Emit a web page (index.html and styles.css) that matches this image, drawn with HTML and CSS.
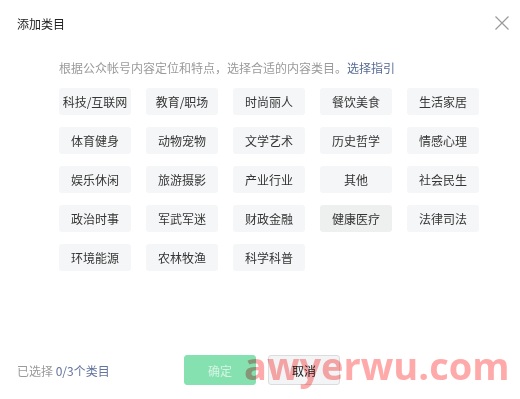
FILE: index.html
```html
<!DOCTYPE html>
<html lang="zh-CN">
<head>
<meta charset="utf-8">
<title>添加类目</title>
<link rel="stylesheet" href="styles.css">
</head>
<body>
<div class="dialog">
  <div class="header">
    <h3 class="title">添加类目</h3>
    <button class="close" aria-label="关闭">
      <svg width="14" height="14" viewBox="0 0 14 14"><path d="M0.5 0.5L13.5 13.5M13.5 0.5L0.5 13.5" stroke="#9a9a9a" stroke-width="1.2" fill="none"/></svg>
    </button>
  </div>
  <div class="main">
    <p class="desc">根据公众帐号内容定位和特点，选择合适的内容类目。<a class="link">选择指引</a></p>
    <ul class="tags">
      <li class="tag">科技/互联网</li>
      <li class="tag">教育/职场</li>
      <li class="tag">时尚丽人</li>
      <li class="tag">餐饮美食</li>
      <li class="tag">生活家居</li>
      <li class="tag">体育健身</li>
      <li class="tag">动物宠物</li>
      <li class="tag">文学艺术</li>
      <li class="tag">历史哲学</li>
      <li class="tag">情感心理</li>
      <li class="tag">娱乐休闲</li>
      <li class="tag">旅游摄影</li>
      <li class="tag">产业行业</li>
      <li class="tag">其他</li>
      <li class="tag">社会民生</li>
      <li class="tag">政治时事</li>
      <li class="tag">军武军迷</li>
      <li class="tag">财政金融</li>
      <li class="tag tag-hover">健康医疗</li>
      <li class="tag">法律司法</li>
      <li class="tag">环境能源</li>
      <li class="tag">农林牧渔</li>
      <li class="tag">科学科普</li>
    </ul>
  </div>
  <div class="footer">
    <div class="count">已选择 <span class="num">0/3个类目</span></div>
    <div class="actions">
      <button class="btn btn-primary">确定</button>
      <button class="btn btn-default">取消</button>
    </div>
    <div></div>
  </div>
  <div class="watermark">awyerwu.com</div>
</div>
</body>
</html>
```
FILE: styles.css
```css
* { box-sizing: border-box; }
html, body { margin: 0; padding: 0; background: #fff; }
body {
  font-family: "Noto Sans CJK SC", "Noto Sans", sans-serif;
  font-size: 12px;
  color: #353535;
}
.dialog {
  position: relative;
  width: 520px;
  height: 399px;
  display: flex;
  flex-direction: column;
  overflow: hidden;
}
.header {
  height: 46px;
  display: flex;
  align-items: center;
  justify-content: space-between;
  padding: 0 11px 0 17px;
}
.title {
  margin: 0;
  font-size: 12px;
  font-weight: normal;
  line-height: 16px;
  color: #222;
  margin-top: 2px;
}
.close {
  border: 0;
  background: none;
  padding: 0;
  width: 14px;
  height: 14px;
  display: flex;
  cursor: pointer;
}
.main {
  flex: 1;
  padding: 0 0 0 59px;
}
.desc {
  margin: 12px 0 0;
  line-height: 20px;
  color: #9a9a9a;
  font-size: 12px;
}
.link { color: #576b95; }
.tags {
  list-style: none;
  margin: 10px 0 0;
  padding: 0;
  display: grid;
  grid-template-columns: repeat(5, 72px);
  column-gap: 15px;
  row-gap: 12px;
}
.tag {
  height: 27px;
  line-height: 27px;
  text-align: center;
  background: #f5f6f7;
  border-radius: 3px;
  color: #353535;
  font-size: 12px;
}
.tag-hover { background: #eeefef; }
.footer {
  display: grid;
  grid-template-columns: 1fr auto 1fr;
  align-items: center;
  padding: 0 13px 14px 17px;
}
.count { color: #9a9a9a; font-size: 12px; }
.num { color: #62739d; }
.actions { display: flex; gap: 12px; }
.btn {
  width: 72px;
  height: 30px;
  border-radius: 3px;
  font-family: inherit;
  font-size: 12px;
  padding: 0;
}
.btn-primary {
  background: #86e1b1;
  border: 1px solid #86e1b1;
  color: rgba(255,255,255,0.65);
}
.btn-default {
  background: #f3f4f5;
  border: 1px solid #dcdcdc;
  color: #222;
}
.watermark {
  position: absolute;
  left: 244px;
  top: 342px;
  font-family: "Open Sans", sans-serif;
  font-weight: 700;
  font-size: 38px;
  line-height: 46px;
  color: #ffaaaa;
  mix-blend-mode: multiply;
  pointer-events: none;
}
```
